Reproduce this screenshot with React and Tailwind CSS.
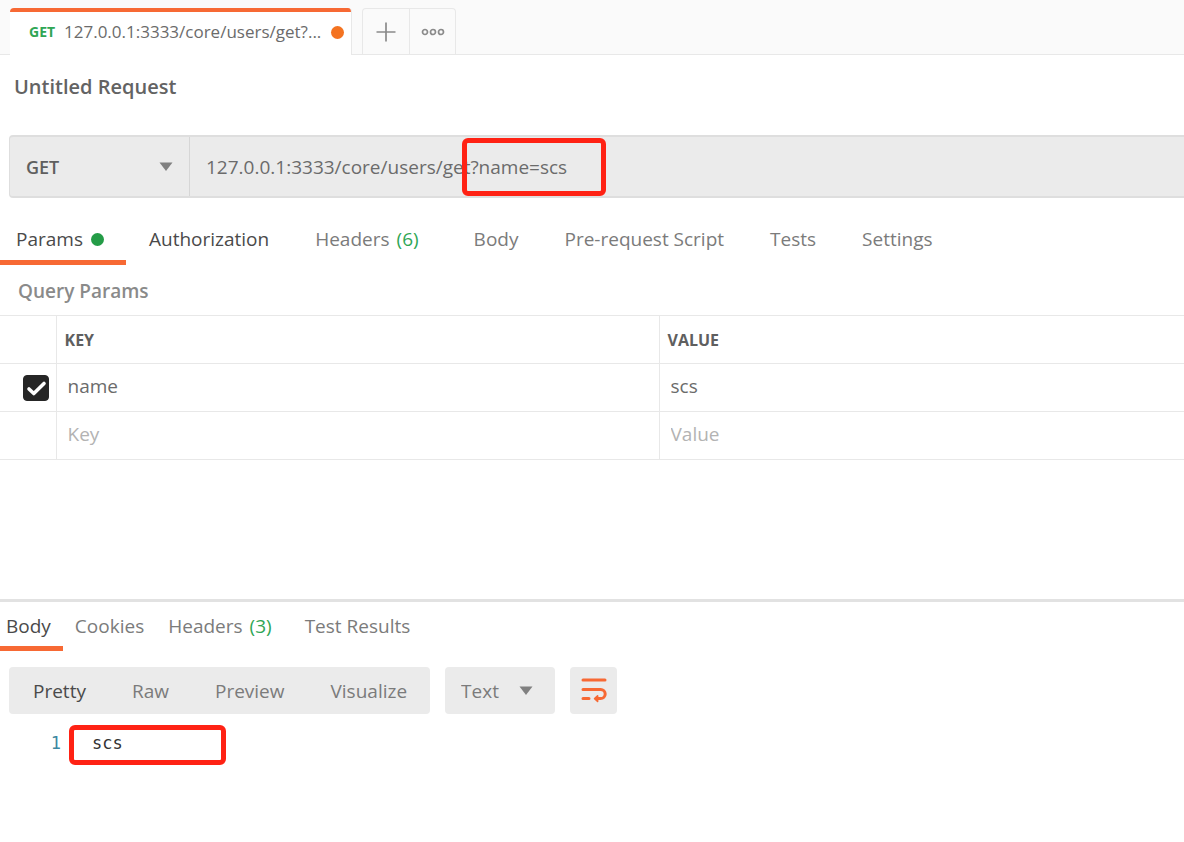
import React from "react";

function Caret({ className }) {
  return (
    <svg viewBox="0 0 14 10" aria-hidden="true" className={"pointer-events-none h-[10px] w-[14px] fill-[#808080] " + className}>
      <path d="M0.5 0.5h13L7 9z" />
    </svg>
  );
}

function WrapIcon() {
  return (
    <svg viewBox="0 0 26 26" fill="none" stroke="#f76934" strokeWidth="3" strokeLinecap="round" strokeLinejoin="round" className="size-[26px]" aria-hidden="true">
      <path d="M2 2h22M2 11.4h17.6a4.6 4.6 0 0 1 0 9.2H17M2 20.6h6" />
      <path d="M16.6 17.8L13.6 20.6l3 2.8z" strokeWidth="1.6" fill="#f76934" />
    </svg>
  );
}

function Tab({ label, count, dot, active, dark, className }) {
  return (
    <button
      type="button"
      role="tab"
      aria-selected={active ? true : false}
      className={
        "flex items-center border-b-[5px] pt-1 whitespace-nowrap " +
        (active ? "border-[#f76934] " : "border-transparent ") +
        (active || dark ? "text-[#4a4a4a] " : "text-[#7b7b7b] ") +
        className
      }
    >
      {label}
      {count && <span className="mr-[9px] ml-[7px] text-[#2fa655]">{count}</span>}
      {dot && <span className="ml-2 size-[13px] rounded-full bg-[#249c47]" />}
    </button>
  );
}

function CellInput({ label, value, placeholder }) {
  return (
    <input
      aria-label={label}
      defaultValue={value}
      placeholder={placeholder}
      className="block h-full w-full bg-transparent px-[11px] pb-[3px] text-[#6b6b6b] outline-none placeholder:text-[#b3b3b3]"
    />
  );
}

function RequestTabs() {
  return (
    <header className="flex h-[55px] items-end border-b border-[#e8e8e8] bg-[#fafafa] pl-[10px]">
      <div className="-mb-px flex h-[47px] w-[342px] flex-col overflow-hidden rounded-t border-r border-[#e8e8e8] bg-white">
        <div className="h-1 bg-[#f76934]" />
        <button type="button" className="flex grow items-center pr-[7px] pb-[3px] pl-[19px] text-left">
          <span className="w-[35px] text-sm font-bold text-[#2fa655]">GET</span>
          <span className="grow text-[17px] whitespace-nowrap text-[#6b6b6b]">127.0.0.1:3333/core/users/get?...</span>
          <span className="size-[13px] shrink-0 rounded-full bg-[#f47321]" />
        </button>
      </div>
      <div className="ml-[10px] flex h-[46px] rounded-t border border-b-0 border-[#e8e8e8] text-[#8a8a8a]">
        <button type="button" aria-label="New tab" className="grid w-[47px] place-items-center border-r border-[#e8e8e8]">
          <svg viewBox="0 0 20 20" stroke="currentColor" strokeWidth="1.7" className="size-5" aria-hidden="true">
            <path d="M10 0.5v19M0.5 10h19" />
          </svg>
        </button>
        <button type="button" aria-label="Tab options" className="grid w-[45px] place-items-center">
          <svg viewBox="0 0 24 8" fill="none" stroke="currentColor" strokeWidth="1.7" className="h-2 w-6" aria-hidden="true">
            <circle cx="4" cy="4" r="2.5" />
            <circle cx="12" cy="4" r="2.5" />
            <circle cx="20" cy="4" r="2.5" />
          </svg>
        </button>
      </div>
    </header>
  );
}

function UrlBar() {
  return (
    <div className="relative ml-[9px] flex h-[63px] rounded-l border-y-2 border-l border-[#dedede] bg-[#ebebeb]">
      <div className="grid w-[180px] items-center border-r border-[#d6d6d6]">
        <select aria-label="Method" className="col-start-1 row-start-1 h-full w-full appearance-none bg-transparent pl-4 text-lg font-semibold text-[#5f5f5f] outline-none">
          <option>GET</option>
          <option>POST</option>
        </select>
        <Caret className="col-start-1 row-start-1 mr-4 justify-self-end" />
      </div>
      <input aria-label="Request URL" defaultValue="127.0.0.1:3333/core/users/get?name=scs" className="min-w-0 grow bg-transparent px-4 text-[19px] text-[#6b6b6b] outline-none" />
      <span className="pointer-events-none absolute top-px left-[452px] h-[58px] w-[144px] rounded-md border-[5px] border-[#ff2214]" />
    </div>
  );
}

function ParamsTable() {
  return (
    <table className="w-full table-fixed border-collapse border-y border-[#e8e8e8] text-left">
      <colgroup>
        <col className="w-[56px]" />
        <col className="w-[603px]" />
        <col />
      </colgroup>
      <thead className="text-base text-[#5f5f5f]">
        <tr className="h-12 border-b border-[#e8e8e8]">
          <th aria-label="Enabled" />
          <th className="border-l border-[#e8e8e8] px-2 font-bold">KEY</th>
          <th className="border-l border-[#e8e8e8] px-2 font-bold">VALUE</th>
        </tr>
      </thead>
      <tbody>
        <tr className="h-12 border-b border-[#e8e8e8]">
          <td className="p-0">
            <label className="ml-[23px] grid size-[26px]">
              <input type="checkbox" defaultChecked aria-label="Enable name" className="col-start-1 row-start-1 size-[26px] appearance-none rounded border border-[#262626] checked:bg-[#262626]" />
              <svg viewBox="0 0 26 26" fill="none" stroke="white" strokeWidth="3.6" strokeLinecap="round" strokeLinejoin="round" className="pointer-events-none col-start-1 row-start-1 size-[26px]" aria-hidden="true">
                <path d="M6 14l4.8 4.5L21 8.5" />
              </svg>
            </label>
          </td>
          <td className="h-12 border-l border-[#e8e8e8] p-0"><CellInput label="Key 1" value="name" /></td>
          <td className="h-12 border-l border-[#e8e8e8] p-0"><CellInput label="Value 1" value="scs" /></td>
        </tr>
        <tr className="h-12">
          <td />
          <td className="h-12 border-l border-[#e8e8e8] p-0"><CellInput label="New key" placeholder="Key" /></td>
          <td className="h-12 border-l border-[#e8e8e8] p-0"><CellInput label="New value" placeholder="Value" /></td>
        </tr>
      </tbody>
    </table>
  );
}

function ResponseToolbar() {
  return (
    <div className="mt-4 ml-[9px] flex h-[47px] gap-[15px] text-[#7b7b7b]">
      <div className="flex items-center rounded bg-[#ebebeb] pl-px">
        <button type="button" className="px-[23px] text-[#4a4a4a]">Pretty</button>
        <button type="button" className="px-[23px]">Raw</button>
        <button type="button" className="px-[23px]">Preview</button>
        <button type="button" className="px-[23px]">Visualize</button>
      </div>
      <div className="grid w-[110px] items-center rounded bg-[#ebebeb]">
        <select aria-label="Format" className="col-start-1 row-start-1 h-full w-full appearance-none bg-transparent pl-4 outline-none">
          <option>Text</option>
          <option>JSON</option>
        </select>
        <Caret className="col-start-1 row-start-1 mr-[22px] justify-self-end" />
      </div>
      <button type="button" aria-label="Wrap lines" className="grid w-[47px] place-items-center rounded bg-[#ebebeb]">
        <WrapIcon />
      </button>
    </div>
  );
}

export default function App() {
  return (
    <div className="flex min-h-screen flex-col overflow-hidden bg-white font-['Open_Sans',sans-serif] text-[19px] leading-6">
      <RequestTabs />
      <h1 className="mt-5 mb-9 ml-[14px] text-xl leading-6 font-semibold text-[#636363]">Untitled Request</h1>
      <UrlBar />
      <nav role="tablist" aria-label="Request" className="mt-4 flex h-[51px]">
        <Tab label="Params" dot active className="pr-[22px] pl-4" />
        <Tab label="Authorization" dark className="px-[23px]" />
        <Tab label="Headers" count="(6)" className="px-[23px]" />
        <Tab label="Body" className="px-[23px]" />
        <Tab label="Pre-request Script" className="px-[23px]" />
        <Tab label="Tests" className="px-[23px]" />
        <Tab label="Settings" className="px-[23px]" />
      </nav>
      <h2 className="mt-[14px] mb-3 ml-[18px] font-semibold text-[#8a8a8a]">Query Params</h2>
      <ParamsTable />
      <section className="mt-[139px] border-t-[3px] border-[#e2e2e2]">
        <nav role="tablist" aria-label="Response" className="flex h-[49px]">
          <Tab label="Body" active className="pr-3 pl-[6px]" />
          <Tab label="Cookies" className="px-3" />
          <Tab label="Headers" count="(3)" className="px-3" />
          <Tab label="Test Results" className="px-3" />
        </nav>
        <ResponseToolbar />
        <div className="mt-[11px] flex h-10 items-center font-['DejaVu_Sans_Mono',monospace] text-[17px]">
          <span className="w-[69px] pr-2 pb-1 text-right text-[#3d87a1]">1</span>
          <code className="flex h-10 w-[157px] items-center rounded-md border-[5px] border-[#ff2214] pb-1 pl-[18px] font-['DejaVu_Sans_Mono',monospace] text-[#333333]">scs</code>
        </div>
      </section>
    </div>
  );
}
